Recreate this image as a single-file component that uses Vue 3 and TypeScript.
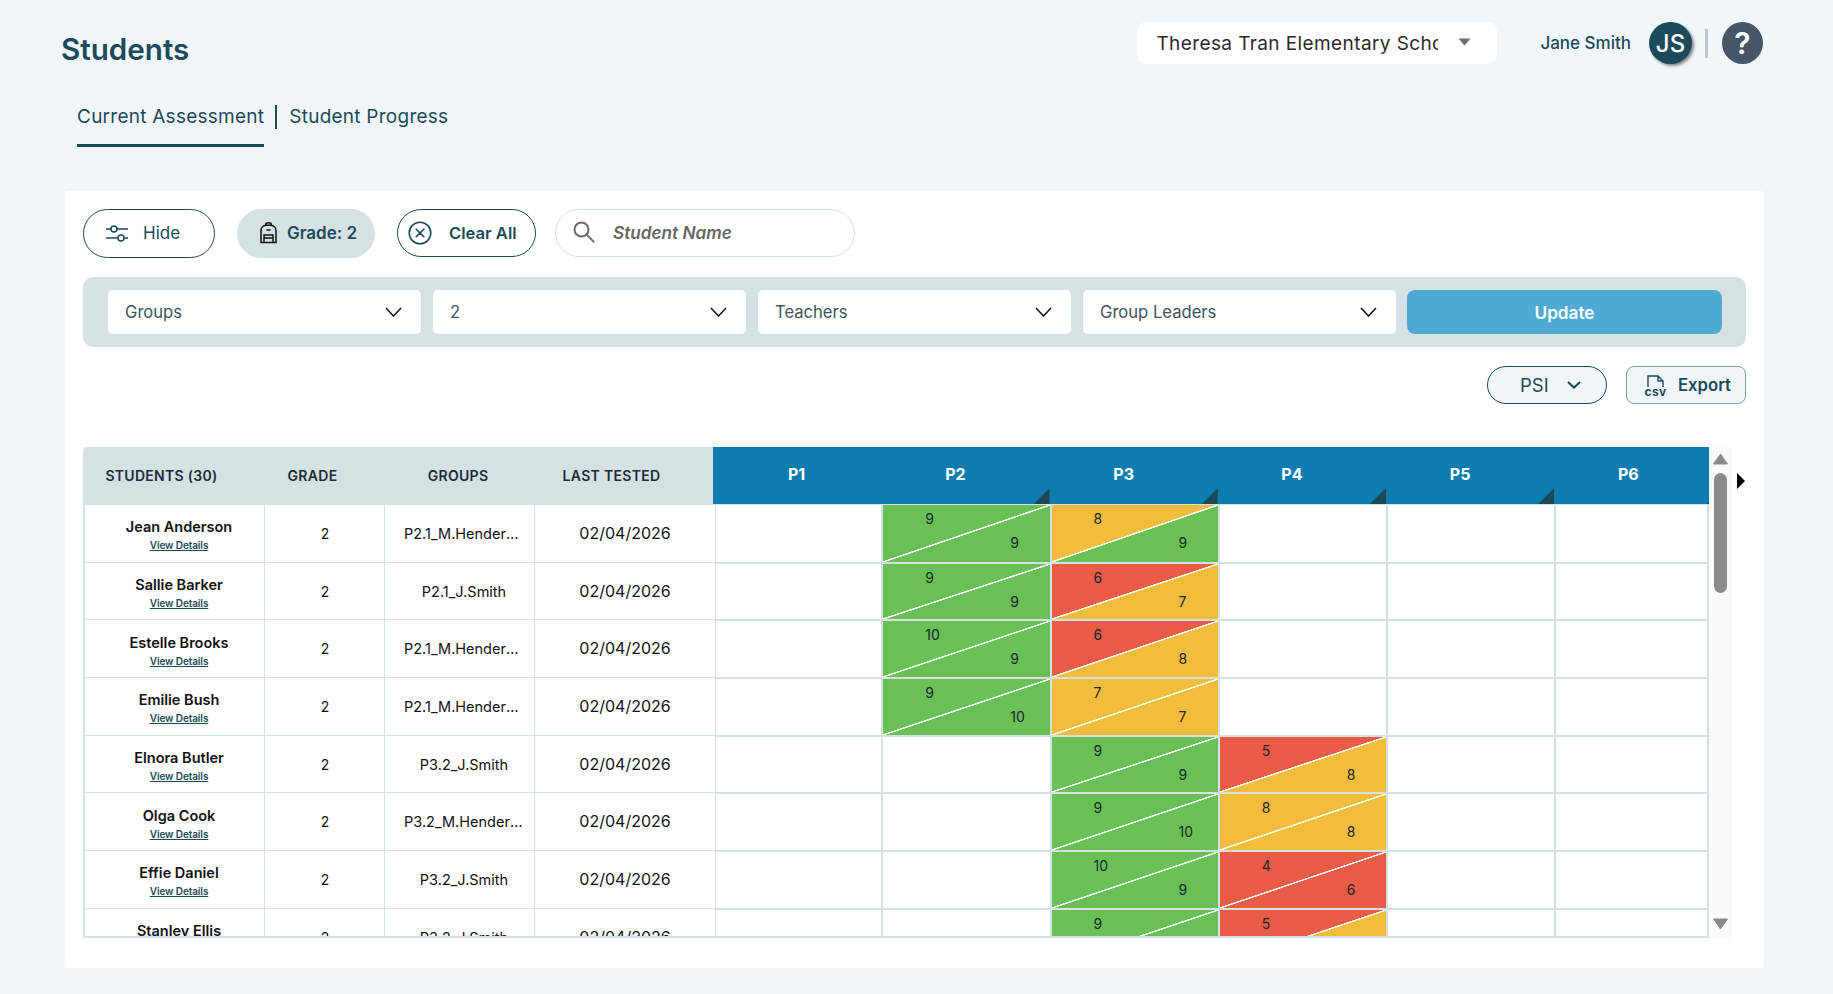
<script setup lang="ts">
type Band = 'g' | 'y' | 'r'
interface Score { col: number; top: number; bottom: number; a: Band; b: Band }
interface Student { name: string; group: string; scores: Score[] }

const colours: Record<Band, string> = { g: '#69c155', y: '#f2bc3c', r: '#ea5c46' }

const students: Student[] = [
  { name: 'Jean Anderson', group: 'P2.1_M.Henderson', scores: [{ col: 1, top: 9, bottom: 9, a: 'g', b: 'g' }, { col: 2, top: 8, bottom: 9, a: 'y', b: 'g' }] },
  { name: 'Sallie Barker', group: 'P2.1_J.Smith', scores: [{ col: 1, top: 9, bottom: 9, a: 'g', b: 'g' }, { col: 2, top: 6, bottom: 7, a: 'r', b: 'y' }] },
  { name: 'Estelle Brooks', group: 'P2.1_M.Henderson', scores: [{ col: 1, top: 10, bottom: 9, a: 'g', b: 'g' }, { col: 2, top: 6, bottom: 8, a: 'r', b: 'y' }] },
  { name: 'Emilie Bush', group: 'P2.1_M.Henderson', scores: [{ col: 1, top: 9, bottom: 10, a: 'g', b: 'g' }, { col: 2, top: 7, bottom: 7, a: 'y', b: 'y' }] },
  { name: 'Elnora Butler', group: 'P3.2_J.Smith', scores: [{ col: 2, top: 9, bottom: 9, a: 'g', b: 'g' }, { col: 3, top: 5, bottom: 8, a: 'r', b: 'y' }] },
  { name: 'Olga Cook', group: 'P3.2_M.Henderson', scores: [{ col: 2, top: 9, bottom: 10, a: 'g', b: 'g' }, { col: 3, top: 8, bottom: 8, a: 'y', b: 'y' }] },
  { name: 'Effie Daniel', group: 'P3.2_J.Smith', scores: [{ col: 2, top: 10, bottom: 9, a: 'g', b: 'g' }, { col: 3, top: 4, bottom: 6, a: 'r', b: 'r' }] },
  { name: 'Stanley Ellis', group: 'P3.2_J.Smith', scores: [{ col: 2, top: 9, bottom: 9, a: 'g', b: 'g' }, { col: 3, top: 5, bottom: 8, a: 'r', b: 'y' }] },
]

const filters = ['Groups', '2', 'Teachers', 'Group Leaders']
const periods = ['P1', 'P2', 'P3', 'P4', 'P5', 'P6']
const cols = [0, 1, 2, 3, 4, 5]

function scoreAt(s: Student, col: number): Score | undefined {
  return s.scores.find((x) => x.col === col)
}
function splitBg(sc: Score): string {
  return `linear-gradient(to bottom right, ${colours[sc.a]} calc(50% - 1px), #ffffff calc(50% - 0.5px), #ffffff calc(50% + 0.5px), ${colours[sc.b]} calc(50% + 1px))`
}
</script>

<template>
  <div class="page">
    <header class="top">
      <h1 class="title">Students</h1>
      <div class="school">
        <span class="school-name">Theresa Tran Elementary School</span>
        <svg class="school-caret" width="13" height="8" viewBox="0 0 13 8"><path d="M0.5 0.5h12L6.5 7.5z" fill="#6d6d6d" /></svg>
      </div>
      <span class="user">Jane Smith</span>
      <div class="avatar">JS</div>
      <div class="divider"></div>
      <div class="help">?</div>
    </header>

    <nav class="tabs">
      <a class="tab active">Current Assessment</a>
      <span class="tab-sep"></span>
      <a class="tab">Student Progress</a>
    </nav>

    <main class="card">
      <div class="toolbar">
        <button class="pill hide">
          <svg width="22" height="17" viewBox="0 0 22 17" fill="none" stroke="#1c4a5a" stroke-width="1.5">
            <path d="M0 4h5M11 4h11M0 13h12M18 13h4" />
            <circle cx="8" cy="4" r="3" />
            <circle cx="15" cy="13" r="3" />
          </svg>
          <span>Hide</span>
        </button>
        <button class="pill grade">
          <svg width="17" height="22" viewBox="0 0 17 22" fill="none" stroke="#111" stroke-width="1.5">
            <path d="M1 20.5V8.5C1 5.5 3.5 3.5 6 3.3h5c2.5.2 5 2.2 5 5.2v12z" />
            <path d="M5.8 3.3V2.4C5.8 1.4 6.6.8 8.5.8s2.7.6 2.7 1.6v.9" />
            <path d="M4 20.5v-7.5h9v7.5M4 16h9M6.5 8h4" />
          </svg>
          <span>Grade: 2</span>
        </button>
        <button class="pill clear">
          <svg width="24" height="24" viewBox="0 0 24 24" fill="none" stroke="#1c4a5a" stroke-width="1.6">
            <circle cx="12" cy="12" r="10.8" />
            <path d="M8.2 8.2l7.6 7.6M15.8 8.2l-7.6 7.6" stroke-linecap="round" />
          </svg>
          <span>Clear All</span>
        </button>
        <div class="search">
          <svg width="22" height="22" viewBox="0 0 22 22" fill="none" stroke="#6b6b6b" stroke-width="2">
            <circle cx="8.5" cy="8.5" r="7" />
            <path d="M13.6 13.6l7 7" stroke-linecap="round" />
          </svg>
          <span>Student Name</span>
        </div>
      </div>

      <div class="filters">
        <div v-for="f in filters" :key="f" class="select">
          <span>{{ f }}</span>
          <svg width="17" height="10" viewBox="0 0 17 10" fill="none" stroke="#111" stroke-width="1.5"><path d="M1 1l7.5 8L16 1" /></svg>
        </div>
        <button class="update">Update</button>
      </div>

      <div class="actions">
        <button class="psi">
          <span>PSI</span>
          <svg width="14" height="8" viewBox="0 0 14 8" fill="none" stroke="#1c4a5a" stroke-width="2"><path d="M1 1l6 5.6L13 1" /></svg>
        </button>
        <button class="export">
          <span class="csv">
            <svg width="20" height="12" viewBox="0 0 20 12" fill="none" stroke="#1c4a5a" stroke-width="1.4"><path d="M2 12V1h10l5 5v6M12 1v5h5" /></svg>
            <span class="csv-text">csv</span>
          </span>
          <span>Export</span>
        </button>
      </div>

      <div class="table-wrap">
        <div class="table">
          <div class="thead">
            <div class="th left c-name">STUDENTS (30)</div>
            <div class="th left c-grade">GRADE</div>
            <div class="th left c-group">GROUPS</div>
            <div class="th left c-date">LAST TESTED</div>
            <div v-for="(p, i) in periods" :key="p" class="th period" :class="{ first: i === 0 }">
              <span>{{ p }}</span>
              <i v-if="i > 0" class="corner"></i>
            </div>
          </div>
          <div class="tbody">
            <div v-for="s in students" :key="s.name" class="row">
              <div class="td name-cell">
                <strong>{{ s.name }}</strong>
                <a>View Details</a>
              </div>
              <div class="td grade-cell">2</div>
              <div class="td group-cell"><span>{{ s.group }}</span></div>
              <div class="td date-cell">02/04/2026</div>
              <div v-for="c in cols" :key="c" class="pcell">
                <div v-if="scoreAt(s, c)" class="split" :style="{ background: splitBg(scoreAt(s, c)!) }">
                  <span class="n-top">{{ scoreAt(s, c)!.top }}</span>
                  <span class="n-bottom">{{ scoreAt(s, c)!.bottom }}</span>
                </div>
              </div>
            </div>
          </div>
        </div>
        <div class="scrollbar">
          <svg width="15" height="12" viewBox="0 0 15 12"><path d="M7.5 1L14.5 11H.5z" fill="#8b8b8b" stroke="#8b8b8b" stroke-linejoin="round" /></svg>
          <div class="thumb"></div>
          <svg class="down" width="15" height="12" viewBox="0 0 15 12"><path d="M7.5 11L14.5 1H.5z" fill="#8b8b8b" stroke="#8b8b8b" stroke-linejoin="round" /></svg>
        </div>
        <svg class="more" width="8" height="16" viewBox="0 0 8 16"><path d="M0 0l8 8-8 8z" fill="#000" /></svg>
      </div>
    </main>
  </div>
</template>

<style>
html, body { margin: 0; background: #f1f6fa; }
</style>

<style scoped>
.page {
  width: 1833px;
  height: 994px;
  overflow: hidden;
  background: #f1f6fa;
  font-family: Inter, "Liberation Sans", sans-serif;
  color: #1c4a5a;
  box-sizing: border-box;
  padding-top: 22px;
}
button { font-family: inherit; margin: 0; cursor: pointer; }
.top {
  display: flex;
  align-items: center;
  height: 42px;
  padding-left: 61px;
}
.title { margin: 12px 0 0; font-size: 29.6px; font-weight: 600; line-height: 42px; color: #1c4a5a; }
.school {
  margin-left: auto;
  width: 360px;
  height: 42px;
  box-sizing: border-box;
  background: #fff;
  border-radius: 10px;
  display: flex;
  align-items: center;
  padding-left: 19px;
}
.school-name {
  width: 282px;
  overflow: hidden;
  white-space: nowrap;
  font-size: 19px;
  color: #2b2b2b;
  letter-spacing: 0.4px;
}
.school-caret { margin-left: 20px; margin-top: -3px; }
.user { margin-left: 43px; font-size: 17px; font-weight: 500; }
.avatar {
  margin-left: 18px;
  width: 43px;
  height: 42px;
  border-radius: 50%;
  background: #1c4a5a;
  color: #fff;
  font-size: 24px;
  font-weight: 500;
  display: flex;
  align-items: center;
  justify-content: center;
  box-shadow: 2px 2px 3px rgba(0, 0, 0, 0.45);
}
.divider { margin-left: 13px; width: 3px; height: 29px; background: #bcc7cd; }
.help {
  margin-left: 14px;
  margin-right: 70px;
  width: 41px;
  height: 42px;
  border-radius: 50%;
  background: #475569;
  color: #fff;
  font-size: 30px;
  font-weight: 600;
  display: flex;
  align-items: center;
  justify-content: center;
}
.tabs {
  display: flex;
  align-items: flex-start;
  margin-top: 41px;
  padding-left: 77px;
  height: 42px;
}
.tab { font-size: 19px; line-height: 24px; padding-bottom: 15px; height: 42px; box-sizing: border-box; color: #1c4a5a; letter-spacing: 0.25px; }
.tab.active { border-bottom: 3px solid #1c4a5a; }
.tab-sep { width: 2px; height: 24px; background: #1c4a5a; margin: 0 12px 0 11px; }
.card {
  margin: 44px 0 0 65px;
  width: 1699px;
  height: 777px;
  box-sizing: border-box;
  background: #fff;
  border-radius: 4px;
  padding: 18px 18px 0;
}
.toolbar { display: flex; align-items: flex-start; }
.pill {
  height: 49px;
  border-radius: 25px;
  box-sizing: border-box;
  background: #fff;
  border: 1px solid #1c4a5a;
  display: flex;
  align-items: center;
  padding: 0 0 1px;
  font-size: 17px;
  color: #1c4a5a;
}
.hide { width: 132px; padding-left: 22px; gap: 15px; }
.grade {
  width: 138px;
  margin-left: 22px;
  padding-left: 23px;
  gap: 10px;
  background: #d6e1e3;
  border: none;
  font-weight: 600;
}
.clear { width: 139px; height: 48px; margin-left: 22px; padding-left: 10px; gap: 17px; font-weight: 600; font-size: 16.6px; }
.search {
  width: 300px;
  height: 48px;
  box-sizing: border-box;
  margin-left: 19px;
  border: 1px solid #d6e1e3;
  border-radius: 24px;
  display: flex;
  align-items: center;
  padding: 0 0 2px 17px;
  gap: 18px;
  font-size: 17.2px;
  font-style: italic;
  font-weight: 600;
  color: #666;
}
.filters {
  margin-top: 19px;
  height: 70px;
  box-sizing: border-box;
  background: #d6e1e3;
  border-radius: 10px;
  padding: 13px 24px 13px 25px;
  display: grid;
  grid-template-columns: repeat(4, 313px) 314px;
  column-gap: 12px;
}
.select {
  background: #fff;
  border-radius: 5px;
  display: flex;
  align-items: center;
  justify-content: space-between;
  padding: 0 19px 1px 17px;
  font-size: 16.6px;
  color: #3d5560;
}
.update {
  border: none;
  border-radius: 8px;
  background: #4eaad2;
  color: #fff;
  font-size: 17.2px;
  font-weight: 600;
  margin-left: -1px;
}
.actions { display: flex; justify-content: flex-end; gap: 19px; margin-top: 19px; }
.psi, .export {
  width: 120px;
  height: 38px;
  box-sizing: border-box;
  background: #f1f6fa;
  display: flex;
  align-items: center;
  color: #1c4a5a;
  padding: 0;
}
.psi {
  border: 1px solid #1c4a5a;
  border-radius: 19px;
  padding-left: 32px;
  gap: 18px;
  font-size: 18.5px;
}
.export {
  border: 1px solid #7f9fa9;
  border-radius: 8px;
  padding-left: 18px;
  gap: 12px;
  font-size: 16.7px;
  font-weight: 600;
}
.csv { display: flex; flex-direction: column; align-items: center; width: 21px; }
.csv-text { font-size: 12px; font-weight: 700; line-height: 9px; letter-spacing: 0.3px; }
.table-wrap { display: flex; align-items: stretch; margin-top: 43px; height: 491px; }
.table { width: 1626px; overflow: hidden; border-radius: 4px 0 0 0; }
.thead { display: flex; height: 57px; overflow: hidden; }
.th { flex: none; height: 57px; box-sizing: border-box; display: flex; align-items: center; justify-content: center; }
.left { background: #d6e1e3; color: #1a2c3a; font-size: 14px; font-weight: 600; letter-spacing: 0.3px; padding-right: 25px; }
.c-name { width: 182px; }
.c-grade { width: 120px; }
.c-group { width: 150px; padding-right: 4px; }
.c-date { width: 178px; }
.period {
  width: 168.25px;
  position: relative;
  background: #0d7db0;
  color: #fff;
  font-size: 16px;
  font-weight: 700;
  padding: 0 24px 4px 0;
}
.period.first { width: 170.25px; padding-right: 3px; }
.corner {
  position: absolute;
  right: 2px;
  bottom: 0;
  width: 16px;
  height: 16px;
  background: #1c4a5a;
  clip-path: polygon(100% 0, 100% 100%, 0 100%);
}
.tbody { height: 434px; box-sizing: border-box; overflow: hidden; border-bottom: 2px solid #d6e1e3; }
.row {
  display: grid;
  grid-template-columns: 182px 120px 150px 181px 167.25px repeat(4, 168.25px) 153px;
  height: 57.7px;
}
.td {
  box-sizing: border-box;
  height: 57.7px;
  border-top: 1px solid #d6e1e3;
  border-right: 1px solid #d6e1e3;
  display: flex;
  align-items: center;
  justify-content: center;
  color: #111;
}
.name-cell {
  flex-direction: column;
  border-left: 2px solid #d6e1e3;
  padding: 3px 0 0 9px;
  gap: 4px;
}
.name-cell strong { font-size: 14.5px; font-weight: 600; line-height: 17px; white-space: nowrap; }
.name-cell a { font-size: 10px; font-weight: 600; line-height: 12px; color: #1c4a5a; text-decoration: underline; letter-spacing: -0.1px; }
.grade-cell { font-size: 14px; padding-left: 1px; }
.group-cell { font-size: 14.5px; padding-left: 19px; justify-content: flex-start; }
.group-cell span { display: block; width: 120px; text-align: center; overflow: hidden; white-space: nowrap; text-overflow: ellipsis; }
.date-cell { font-size: 16px; padding-bottom: 1px; }
.pcell {
  box-sizing: border-box;
  height: 57.7px;
  border-top: 2px solid #d6e1e3;
  border-right: 2px solid #d6e1e3;
}
.row:first-child .pcell { border-top-width: 1px; }
.split {
  height: 100%;
  display: flex;
  flex-direction: column;
  font-size: 14px;
  line-height: 18px;
  color: #1a2433;
  padding-top: 5px;
  box-sizing: border-box;
}
.n-top { margin-left: 42px; }
.n-bottom { margin-left: 127px; margin-top: 6px; }
.scrollbar {
  width: 23px;
  background: #fafafa;
  display: flex;
  flex-direction: column;
  align-items: center;
  padding: 6px 0 8px;
  box-sizing: border-box;
}
.thumb { width: 13px; height: 120px; margin-top: 8px; border-radius: 7px; background: #8b8b8b; }
.down { margin-top: auto; }
.more { margin: 26px 0 0 5px; }
</style>
